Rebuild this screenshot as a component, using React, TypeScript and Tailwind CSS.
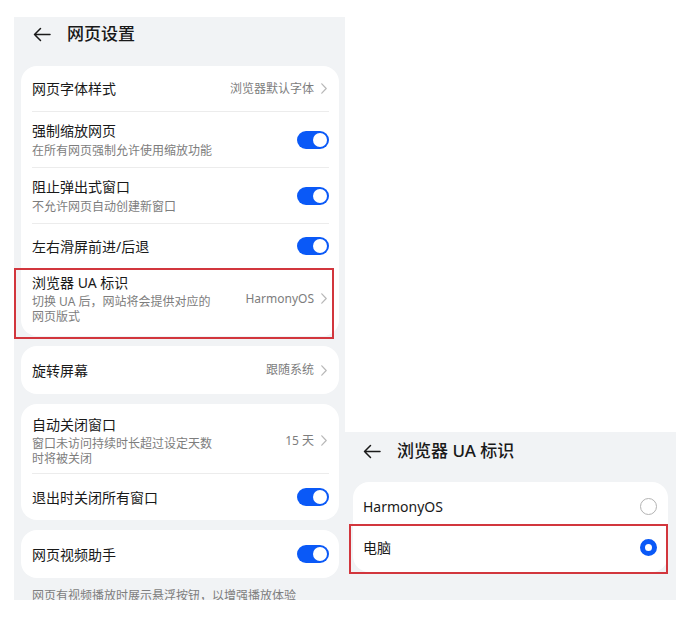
import React from 'react';

const font = "font-['Noto_Sans','Noto_Sans_CJK_SC',sans-serif]";

const BackArrow = () => (
  <svg width="18" height="15" viewBox="0 0 18 15">
    <path
      d="M17 7.5H1.5M7.5 1.5L1.5 7.5L7.5 13.5"
      stroke="#1a1a1a"
      strokeWidth="1.5"
      fill="none"
      strokeLinecap="round"
      strokeLinejoin="round"
    />
  </svg>
);

const Chevron = () => (
  <svg width="6" height="11" viewBox="0 0 6 11">
    <path
      d="M0.8 0.8L5.2 5.5L0.8 10.2"
      stroke="#b8b8b8"
      strokeWidth="1.2"
      fill="none"
      strokeLinecap="round"
      strokeLinejoin="round"
    />
  </svg>
);

const Toggle = () => (
  <div className="w-[32px] h-[18px] rounded-full bg-[#0a59f7] flex items-center justify-end pr-[2px] shrink-0">
    <div className="w-[14px] h-[14px] rounded-full bg-white" />
  </div>
);

const Value = ({ text }: { text: string }) => (
  <div className="flex items-center gap-[7px] shrink-0 ml-auto pr-[2px]">
    <span className="text-[12px] leading-[16px] text-[#7d7d7d]">{text}</span>
    <Chevron />
  </div>
);

const Divider = () => <div className="h-px bg-[#ececec] ml-[11px] mr-[10px]" />;

const Radio = ({ checked }: { checked?: boolean }) =>
  checked ? (
    <div className="w-[17px] h-[17px] rounded-full border-[5px] border-[#0a59f7] bg-white" />
  ) : (
    <div className="w-[17px] h-[17px] rounded-full border-[1.5px] border-[#b3b3b3] bg-white" />
  );

export default function App() {
  return (
    <div className={`${font} w-[676px] h-[619px] bg-white flex items-start pt-[17px] pl-[14px] text-[#191919]`}>
      {/* web settings page */}
      <div className="w-[331px] h-[583px] bg-[#f1f3f5] overflow-hidden">
        <div className="h-[34px] flex items-center pl-[19px] gap-[16px]">
          <BackArrow />
          <span className="text-[17px] font-medium leading-[22px]">网页设置</span>
        </div>

        <div className="ml-[7px] mr-[6px] mt-[15px] flex flex-col gap-[10px]">
          <div className="bg-white rounded-[16px]">
            <div className="h-[45px] flex items-center pl-[11px] pr-[10px]">
              <span className="text-[14px]">网页字体样式</span>
              <Value text="浏览器默认字体" />
            </div>
            <Divider />
            <div className="h-[55px] flex items-center pl-[11px] pr-[10px]">
              <div className="flex flex-col">
                <span className="text-[14px] leading-[20px]">强制缩放网页</span>
                <span className="text-[12px] leading-[16px] mt-[2px] text-[#7d7d7d]">在所有网页强制允许使用缩放功能</span>
              </div>
              <div className="ml-auto">
                <Toggle />
              </div>
            </div>
            <Divider />
            <div className="h-[55px] flex items-center pl-[11px] pr-[10px]">
              <div className="flex flex-col">
                <span className="text-[14px] leading-[20px]">阻止弹出式窗口</span>
                <span className="text-[12px] leading-[16px] mt-[2px] text-[#7d7d7d]">不允许网页自动创建新窗口</span>
              </div>
              <div className="ml-auto">
                <Toggle />
              </div>
            </div>
            <Divider />
            <div className="h-[44px] flex items-center pl-[11px] pr-[10px]">
              <span className="text-[14px]">左右滑屏前进/后退</span>
              <div className="ml-auto">
                <Toggle />
              </div>
            </div>
            <div className="relative flex items-center pl-[11px] pr-[10px] pt-[5px] pb-[12px]">
              <div className="flex flex-col w-[186px]">
                <span className="text-[14px] leading-[20px]">浏览器 UA 标识</span>
                <span className="text-[12px] leading-[15px] mt-[1px] text-[#7d7d7d]">切换 UA 后，网站将会提供对应的网页版式</span>
              </div>
              <Value text="HarmonyOS" />
              <div className="absolute left-[-7px] right-[5px] top-0 bottom-[-3px] border-2 border-[#d2363d]" />
            </div>
          </div>

          <div className="bg-white rounded-[16px] h-[48px] flex items-center pl-[11px] pr-[10px]">
            <span className="text-[14px]">旋转屏幕</span>
            <Value text="跟随系统" />
          </div>

          <div className="bg-white rounded-[16px]">
            <div className="flex items-center pl-[11px] pr-[10px] pt-[11px] pb-[7px]">
              <div className="flex flex-col w-[186px]">
                <span className="text-[14px] leading-[20px]">自动关闭窗口</span>
                <span className="text-[12px] leading-[15px] mt-[1px] text-[#7d7d7d]">窗口未访问持续时长超过设定天数时将被关闭</span>
              </div>
              <Value text="15 天" />
            </div>
            <Divider />
            <div className="h-[46px] flex items-center pl-[11px] pr-[10px]">
              <span className="text-[14px]">退出时关闭所有窗口</span>
              <div className="ml-auto">
                <Toggle />
              </div>
            </div>
          </div>

          <div className="bg-white rounded-[16px] h-[48px] flex items-center pl-[11px] pr-[10px]">
            <span className="text-[14px]">网页视频助手</span>
            <div className="ml-auto">
              <Toggle />
            </div>
          </div>
        </div>

        <div className="pl-[18px] pt-[10px] text-[12px] leading-[16px] text-[#7d7d7d]">
          网页有视频播放时展示悬浮按钮，以增强播放体验
        </div>
      </div>

      {/* UA picker page */}
      <div className="w-[331px] h-[168px] mt-[415px] bg-[#f1f3f5]">
        <div className="h-[38px] flex items-center pl-[18px] gap-[16px]">
          <BackArrow />
          <span className="text-[17px] font-medium leading-[22px]">浏览器 UA 标识</span>
        </div>
        <div className="mx-[8px] mt-[12px] bg-white rounded-[16px] py-[4px]">
          <div className="h-[41px] flex items-center pl-[10px] pr-[11px]">
            <span className="text-[14px]">HarmonyOS</span>
            <div className="ml-auto">
              <Radio />
            </div>
          </div>
          <div className="relative h-[41px] flex items-center pl-[10px] pr-[11px]">
            <span className="text-[14px]">电脑</span>
            <div className="ml-auto">
              <Radio checked />
            </div>
            <div className="absolute left-[-4px] right-0 top-[-3px] bottom-[-6px] border-2 border-[#d2363d]" />
          </div>
        </div>
      </div>
    </div>
  );
}
